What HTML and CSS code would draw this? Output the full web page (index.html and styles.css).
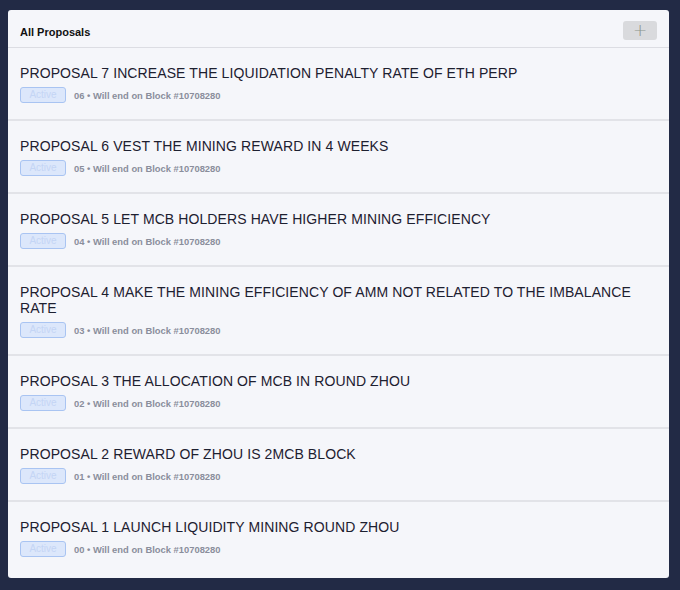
FILE: index.html
```html
<!DOCTYPE html>
<html lang="en">
<head>
  <meta charset="UTF-8">
  <title>All Proposals</title>
  <link rel="stylesheet" href="styles.css">
</head>
<body>
  <div class="card">
    <div class="card-header">
      <span class="card-title">All Proposals</span>
      <button class="add-button">+</button>
    </div>

    <div class="proposal">
      <div class="proposal-title">PROPOSAL 7 INCREASE THE LIQUIDATION PENALTY RATE OF ETH PERP</div>
      <div class="proposal-meta">
        <span class="badge">Active</span>
        <span class="meta-text">06 • Will end on Block #10708280</span>
      </div>
    </div>
    <div class="proposal">
      <div class="proposal-title">PROPOSAL 6 VEST THE MINING REWARD IN 4 WEEKS</div>
      <div class="proposal-meta">
        <span class="badge">Active</span>
        <span class="meta-text">05 • Will end on Block #10708280</span>
      </div>
    </div>
    <div class="proposal">
      <div class="proposal-title">PROPOSAL 5 LET MCB HOLDERS HAVE HIGHER MINING EFFICIENCY</div>
      <div class="proposal-meta">
        <span class="badge">Active</span>
        <span class="meta-text">04 • Will end on Block #10708280</span>
      </div>
    </div>
    <div class="proposal">
      <div class="proposal-title">PROPOSAL 4 MAKE THE MINING EFFICIENCY OF AMM NOT RELATED TO THE IMBALANCE RATE</div>
      <div class="proposal-meta">
        <span class="badge">Active</span>
        <span class="meta-text">03 • Will end on Block #10708280</span>
      </div>
    </div>
    <div class="proposal">
      <div class="proposal-title">PROPOSAL 3 THE ALLOCATION OF MCB IN ROUND ZHOU</div>
      <div class="proposal-meta">
        <span class="badge">Active</span>
        <span class="meta-text">02 • Will end on Block #10708280</span>
      </div>
    </div>
    <div class="proposal">
      <div class="proposal-title">PROPOSAL 2 REWARD OF ZHOU IS 2MCB BLOCK</div>
      <div class="proposal-meta">
        <span class="badge">Active</span>
        <span class="meta-text">01 • Will end on Block #10708280</span>
      </div>
    </div>
    <div class="proposal last">
      <div class="proposal-title">PROPOSAL 1 LAUNCH LIQUIDITY MINING ROUND ZHOU</div>
      <div class="proposal-meta">
        <span class="badge">Active</span>
        <span class="meta-text">00 • Will end on Block #10708280</span>
      </div>
    </div>
  </div>
</body>
</html>
```

FILE: styles.css
```css
body { margin: 0; padding: 10px 11px 12px 8px; background-color: #222a45; font-family: "Liberation Sans", Arial, sans-serif; }
.card { background-color: #f5f6fa; border-radius: 3px; padding-bottom: 5px; }
.card-header { display: flex; justify-content: space-between; align-items: center; height: 37px; padding: 0 12px; border-bottom: 1px solid #dcdde3; }
.card-title { font-size: 11px; font-weight: bold; color: #111; margin-top: 6px; }
.add-button { width: 34px; height: 19px; margin-top: 3px; border: none; border-radius: 3px; background-color: #d9dadd; color: #8a948c; font-size: 17px; line-height: 19px; padding: 0; font-family: "DejaVu Sans", sans-serif; font-weight: 300; }
.proposal { padding: 17px 12px 16px 12px; border-bottom: 2px solid #e2e3e8; }
.proposal.last { border-bottom: none; }
.proposal-title { font-size: 14px; line-height: 16px; letter-spacing: 0.1px; color: #1d2030; }
.proposal-meta { display: flex; align-items: center; gap: 8px; margin-top: 6px; }
.badge { width: 44px; height: 14px; border: 1px solid #a9c4f2; border-radius: 3px; background-color: #dce7fb; color: #c4d5f5; font-size: 10px; line-height: 14px; text-align: center; }
.meta-text { font-size: 9.4px; font-weight: bold; color: #8a8e9c; }
```
